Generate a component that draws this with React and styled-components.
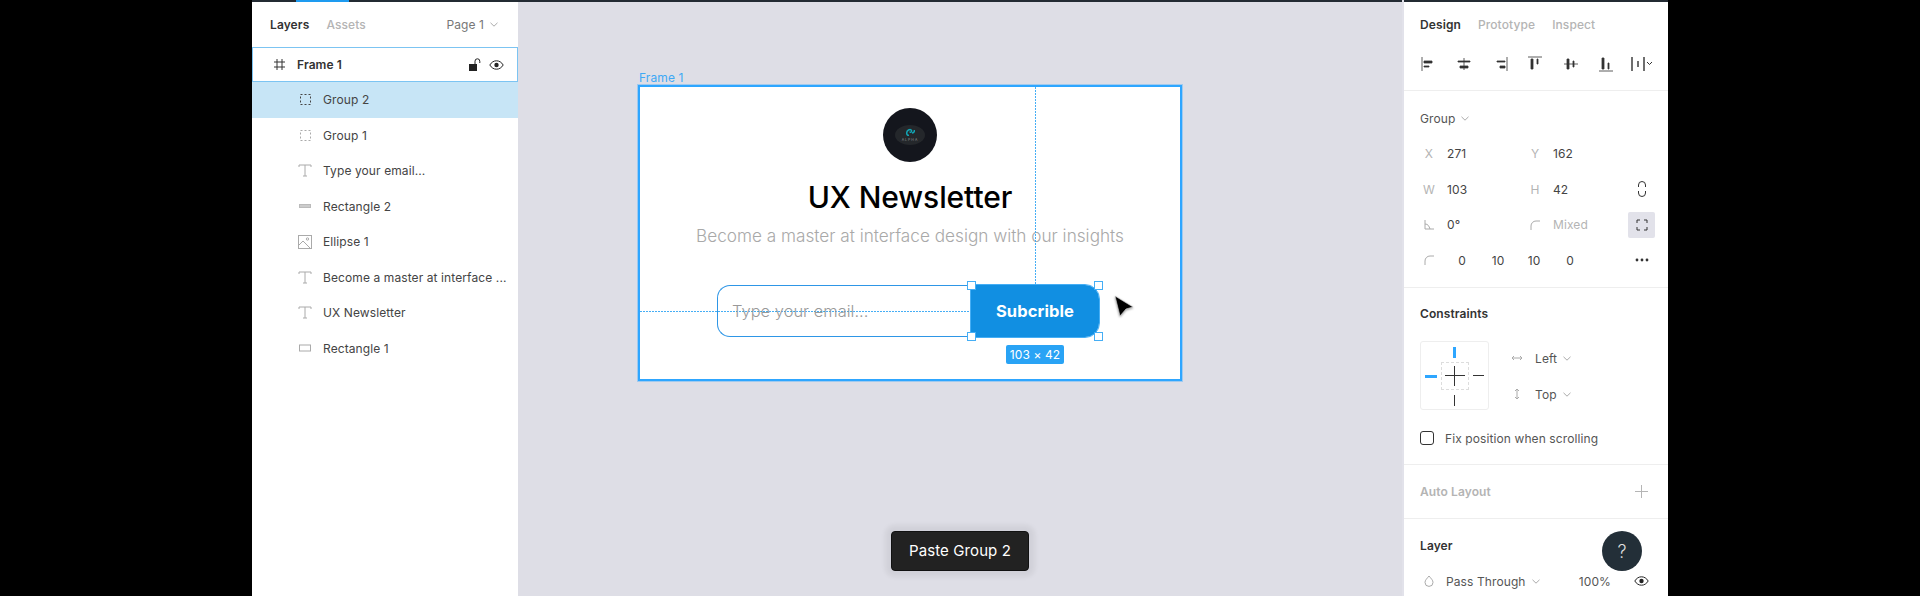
import React from "react";
import styled, { createGlobalStyle } from "styled-components";

const GlobalStyle = createGlobalStyle`
  html, body {
    margin: 0;
    padding: 0;
    background: #000;
    font-family: "Inter", "Liberation Sans", sans-serif;
  }
  * { box-sizing: border-box; }
`;

const layers = [
  { name: "Group 2", kind: "group", active: true },
  { name: "Group 1", kind: "groupLight" },
  { name: "Type your email...", kind: "text" },
  { name: "Rectangle 2", kind: "bar" },
  { name: "Ellipse 1", kind: "image" },
  { name: "Become a master at interface ...", kind: "text" },
  { name: "UX Newsletter", kind: "text" },
  { name: "Rectangle 1", kind: "rect" },
];

// small icons drawn by hand, figma's own set is not in the packages
const LayerIcon = ({ kind }) => {
  if (kind === "group" || kind === "groupLight") {
    const c = kind === "group" ? "#444" : "#aaa";
    return (
      <svg width="13" height="13" viewBox="0 0 13 13">
        <rect x="1.5" y="1.5" width="10" height="10" fill="none" stroke={c} strokeDasharray="2 2" />
      </svg>
    );
  }
  if (kind === "text") {
    return (
      <svg width="14" height="13" viewBox="0 0 14 13">
        <path d="M1 3V1h12v2M7 1v11M5 12h4" fill="none" stroke="#aaa" />
      </svg>
    );
  }
  if (kind === "bar") {
    return (
      <svg width="12" height="5" viewBox="0 0 12 5">
        <rect x="0.5" y="0.5" width="11" height="3" fill="#ccc" stroke="#bbb" />
      </svg>
    );
  }
  if (kind === "image") {
    return (
      <svg width="14" height="14" viewBox="0 0 14 14">
        <rect x="0.5" y="0.5" width="13" height="13" fill="none" stroke="#aaa" />
        <circle cx="9.5" cy="4" r="1.2" fill="none" stroke="#aaa" />
        <path d="M1 10l4-4 7 7" fill="none" stroke="#aaa" />
      </svg>
    );
  }
  return (
    <svg width="12" height="8" viewBox="0 0 12 8">
      <rect x="0.5" y="1" width="11" height="6" fill="none" stroke="#aaa" />
    </svg>
  );
};

const Eye = () => (
  <svg width="15" height="10" viewBox="0 0 15 10">
    <path d="M0.8 5C2.5 2.2 4.8 0.8 7.5 0.8S12.5 2.2 14.2 5C12.5 7.8 10.2 9.2 7.5 9.2S2.5 7.8 0.8 5Z" fill="none" stroke="#222" />
    <circle cx="7.5" cy="5" r="2.2" fill="#222" />
  </svg>
);

const Chevron = ({ color = "#aaa" }) => (
  <svg width="8" height="5" viewBox="0 0 8 5">
    <path d="M0.5 0.8L4 4.2l3.500-3.400" fill="none" stroke={color} />
  </svg>
);

const CornerMark = () => (
  <svg width="10" height="10" viewBox="0 0 10 10">
    <path d="M1 10V6a5 5 0 0 1 5-5h4" fill="none" stroke="#aaa" />
  </svg>
);

const alignIcons = [
  "M1 1v14 M3 5h8v2H3z M3 10h5v1H3z",
  "M8 2v12 M2 5h12v1H2z M4 10h8v2H4z",
  "M15 1v14 M5 5h8v1H5z M8 10h5v2H8z",
  "M1 1h14 M4 3v10h2V3z M10 3v5h1V3z",
  "M1 8h14 M4 3h2v10H4z M10 5h1v6h-1z",
  "M1 15h14 M4 2h2v11H4z M10 7h1v6h-1z",
];

const App = () => (
  <>
    <GlobalStyle />
    <Page>
      <LeftPanel>
        <TopStrip>
          <StripAccent />
        </TopStrip>
        <PanelTabs>
          <Tab $on>Layers</Tab>
          <Tab>Assets</Tab>
          <PagePicker>
            Page 1 <Chevron />
          </PagePicker>
        </PanelTabs>
        <FrameRow>
          <svg width="13" height="13" viewBox="0 0 13 13">
            <path d="M4 1v11M9 1v11M1 4h11M1 9h11" stroke="#333" fill="none" />
          </svg>
          <FrameName>Frame 1</FrameName>
          <RowTools>
            <svg width="13" height="14" viewBox="0 0 13 14">
              <rect x="0" y="6" width="8" height="7" fill="#222" />
              <path d="M6 6V3.2a2.4 2.4 0 0 1 4.8 0V5" fill="none" stroke="#222" />
            </svg>
            <Eye />
          </RowTools>
        </FrameRow>
        {layers.map((layer) => (
          <LayerRow key={layer.name} $active={layer.active}>
            <LayerIconBox>
              <LayerIcon kind={layer.kind} />
            </LayerIconBox>
            <span>{layer.name}</span>
          </LayerRow>
        ))}
      </LeftPanel>

      <Canvas>
        <TopStrip />
        <FrameLabel>Frame 1</FrameLabel>
        <Frame>
          <GuideV />
          <GuideH />
          <Avatar>
            <AvatarBlob>
              <svg width="10" height="8" viewBox="0 0 10 8">
                <path d="M4 7.500C1 7.500 1 3.500 3.500 2c2-1 3.500 0 3 1.500-.5 1-1.500 1-1.500 0M7 5c1.500 0 2.500-1 2.500-3" fill="none" stroke="#12a5b5" strokeWidth="1.500" />
              </svg>
              <AvatarText>ALPHA</AvatarText>
            </AvatarBlob>
          </Avatar>
          <Title>UX Newsletter</Title>
          <Subtitle>Become a master at interface design with our insights</Subtitle>
          <Form>
            <EmailBox>Type your email...</EmailBox>
            <SubmitButton>
              Subcrible
              <Handle $x="left" $y="top" />
              <Handle $x="right" $y="top" />
              <Handle $x="left" $y="bottom" />
              <Handle $x="right" $y="bottom" />
              <SizeTag>103 × 42</SizeTag>
            </SubmitButton>
            <Cursor width="24" height="26" viewBox="0 0 24 26">
              <path d="M3 2l18 11-7 2-6 7z" fill="#000" stroke="#ddd" strokeWidth="0.6" />
            </Cursor>
          </Form>
        </Frame>
        <Toast>Paste Group 2</Toast>
      </Canvas>

      <RightPanel>
        <TopStrip />
        <PanelTabs $right>
          <Tab $on>Design</Tab>
          <Tab>Prototype</Tab>
          <Tab>Inspect</Tab>
        </PanelTabs>
        <AlignBar>
          {alignIcons.map((d) => (
            <AlignCell key={d}>
              <svg width="16" height="16" viewBox="0 0 16 16">
                <path d={d} fill="#333" stroke="#333" strokeWidth="0.8" />
              </svg>
            </AlignCell>
          ))}
          <AlignCell>
            <svg width="22" height="16" viewBox="0 0 22 16">
              <path d="M1 1v14M13 1v14M7 5v6" stroke="#333" strokeWidth="1.4" fill="none" />
              <path d="M16 6l2.5 2.5L21 6" stroke="#333" fill="none" />
            </svg>
          </AlignCell>
        </AlignBar>
        <Section $height={197}>
          <SectionHead $top={9}>
            <Dropdown>
              Group <Chevron />
            </Dropdown>
          </SectionHead>
          <PropRow>
            <PropLabel>X</PropLabel>
            <PropValue>271</PropValue>
            <PropLabel>Y</PropLabel>
            <PropValue>162</PropValue>
          </PropRow>
          <PropRow>
            <PropLabel>W</PropLabel>
            <PropValue>103</PropValue>
            <PropLabel>H</PropLabel>
            <PropValue>42</PropValue>
            <ToolCell>
              <svg width="10" height="16" viewBox="0 0 10 16">
                <path d="M1.5 6V4a3.5 3.5 0 0 1 7 0v2M1.5 10v2a3.5 3.5 0 0 0 7 0v-2" fill="none" stroke="#333" />
              </svg>
            </ToolCell>
          </PropRow>
          <PropRow>
            <PropLabel>
              <svg width="10" height="10" viewBox="0 0 10 10">
                <path d="M1 0v9h9M1 4c3 0 4 2 5 5" fill="none" stroke="#aaa" />
              </svg>
            </PropLabel>
            <PropValue>0°</PropValue>
            <PropLabel>
              <CornerMark />
            </PropLabel>
            <PropValue $muted>Mixed</PropValue>
            <ToolCell $on>
              <svg width="12" height="12" viewBox="0 0 12 12">
                <path d="M1 4V1h3M8 1h3v3M11 8v3H8M4 11H1V8" fill="none" stroke="#333" />
              </svg>
            </ToolCell>
          </PropRow>
          <CornerRow>
            <PropLabel>
              <CornerMark />
            </PropLabel>
            <CornerValues>
              {["0", "10", "10", "0"].map((v, i) => (
                <CornerValue key={i}>{v}</CornerValue>
              ))}
            </CornerValues>
            <ToolCell>
              <svg width="14" height="4" viewBox="0 0 14 4">
                <circle cx="2" cy="2" r="1.4" fill="#333" />
                <circle cx="7" cy="2" r="1.4" fill="#333" />
                <circle cx="12" cy="2" r="1.4" fill="#333" />
              </svg>
            </ToolCell>
          </CornerRow>
        </Section>
        <Section $height={177}>
          <SectionHead $top={7}>
            <SectionTitle>Constraints</SectionTitle>
          </SectionHead>
          <ConstraintBody>
            <ConstraintBox>
              <InnerBox />
              <Plus $wide />
              <Plus />
              <Tick $pos="top" $on />
              <Tick $pos="bottom" />
              <Tick $pos="left" $on />
              <Tick $pos="right" />
            </ConstraintBox>
            <ConstraintPickers>
              <PickerRow>
                <svg width="12" height="8" viewBox="0 0 12 8">
                  <path d="M1 4h10M3 2L1 4l2 2M9 2l2 2-2 2" fill="none" stroke="#aaa" />
                </svg>
                <Dropdown>
                  Left <Chevron />
                </Dropdown>
              </PickerRow>
              <PickerRow>
                <svg width="12" height="12" viewBox="0 0 12 12">
                  <path d="M6 1v10M4 3l2-2 2 2M4 9l2 2 2-2" fill="none" stroke="#aaa" />
                </svg>
                <Dropdown>
                  Top <Chevron />
                </Dropdown>
              </PickerRow>
            </ConstraintPickers>
          </ConstraintBody>
          <CheckRow>
            <CheckBox />
            Fix position when scrolling
          </CheckRow>
        </Section>
        <Section $height={54}>
          <AutoHead>
            <SectionTitle $muted>Auto Layout</SectionTitle>
            <svg width="13" height="13" viewBox="0 0 13 13">
              <path d="M6.5 0v13M0 6.5h13" stroke="#b5b5b5" />
            </svg>
          </AutoHead>
        </Section>
        <Section>
          <SectionHead $top={8}>
            <SectionTitle>Layer</SectionTitle>
          </SectionHead>
          <BlendRow>
            <svg width="10" height="12" viewBox="0 0 10 12">
              <path d="M5 1c2 2.5 4 4.2 4 6.4A4 4 0 0 1 1 7.4C1 5.200 3 3.500 5 1Z" fill="none" stroke="#aaa" />
            </svg>
            <Dropdown>
              Pass Through <Chevron />
            </Dropdown>
            <Opacity>100%</Opacity>
            <Eye />
          </BlendRow>
        </Section>
        <HelpButton>?</HelpButton>
      </RightPanel>
    </Page>
  </>
);

export default App;

const Page = styled.div`
  display: flex;
  width: 1920px;
  height: 596px;
  padding-left: 252px;
  overflow: hidden;
  background: #000;
  color: #333;
  font-size: 12px;
  letter-spacing: 0.1px;
`;

const TopStrip = styled.div`
  height: 2px;
  background: #232b33;
  flex: none;
`;

const StripAccent = styled.div`
  width: 53px;
  height: 2px;
  margin-left: 44px;
  background: #1e9bf0;
`;

const LeftPanel = styled.aside`
  width: 266px;
  flex: none;
  background: #fff;
`;

const PanelTabs = styled.div`
  display: flex;
  align-items: center;
  gap: 17px;
  height: ${(p) => (p.$right ? 44 : 45)}px;
  padding: 0 20px 0 ${(p) => (p.$right ? 16 : 18)}px;
`;

const Tab = styled.span`
  font-weight: ${(p) => (p.$on ? 600 : 500)};
  color: ${(p) => (p.$on ? "#333" : "#b4b4b4")};
`;

const PagePicker = styled.span`
  display: flex;
  align-items: center;
  gap: 6px;
  margin-left: auto;
  color: #777;
`;

const FrameRow = styled.div`
  display: flex;
  align-items: center;
  height: 35px;
  padding: 0 13px 0 20px;
  border: 1px solid #7cc4f2;
`;

const FrameName = styled.span`
  margin-left: 11px;
  font-weight: 600;
`;

const RowTools = styled.div`
  display: flex;
  align-items: center;
  gap: 7px;
  margin-left: auto;
`;

const LayerRow = styled.div`
  display: flex;
  align-items: center;
  height: 35.5px;
  padding-left: 44px;
  color: #444;
  white-space: nowrap;
  background: ${(p) => (p.$active ? "#c7e5f6" : "transparent")};
`;

const LayerIconBox = styled.span`
  display: flex;
  align-items: center;
  justify-content: center;
  width: 18px;
  margin-right: 9px;
`;

const Canvas = styled.main`
  position: relative;
  width: 884px;
  flex: none;
  background: #dedee6;
`;

const FrameLabel = styled.div`
  position: absolute;
  left: 121px;
  top: 70px;
  color: #3fa9f5;
`;

const Frame = styled.div`
  position: absolute;
  left: 120px;
  top: 85px;
  display: flex;
  flex-direction: column;
  align-items: center;
  width: 544px;
  height: 296px;
  padding-top: 21px;
  background: #fff;
  border: 2px solid #2ea6ff;
  box-shadow: 0 0 0 1px rgba(46, 166, 255, 0.35);
`;

const GuideV = styled.div`
  position: absolute;
  left: 395px;
  top: 0;
  width: 1px;
  height: 198px;
  background: repeating-linear-gradient(180deg, #45aef5 0 2px, transparent 2px 3px);
`;

const GuideH = styled.div`
  position: absolute;
  left: 0;
  top: 224px;
  width: 331px;
  height: 1px;
  background: repeating-linear-gradient(90deg, #45aef5 0 2px, transparent 2px 3px);
`;

const Avatar = styled.div`
  display: flex;
  align-items: center;
  justify-content: center;
  width: 54px;
  height: 54px;
  flex: none;
  border-radius: 50%;
  background: #14161d;
`;

const AvatarBlob = styled.div`
  display: flex;
  flex-direction: column;
  align-items: center;
  justify-content: center;
  gap: 2px;
  width: 30px;
  height: 20px;
  border-radius: 50%;
  background: #24272b;
`;

const AvatarText = styled.span`
  font-size: 3.500px;
  line-height: 4px;
  letter-spacing: 1px;
  color: #8b8f94;
`;

const Title = styled.h1`
  margin: 15px 0 0;
  font-size: 30px;
  line-height: 40px;
  font-weight: 500;
  color: #000;
  letter-spacing: -0.1px;
`;

const Subtitle = styled.p`
  margin: 7px 0 0;
  font-size: 17.2px;
  line-height: 24px;
  font-weight: 300;
  color: #a9a9a9;
  letter-spacing: 0;
`;

const Form = styled.div`
  position: relative;
  display: flex;
  width: 382px;
  height: 52px;
  margin: 37px 4px 0 0;
`;

const EmailBox = styled.div`
  display: flex;
  align-items: center;
  flex: 1;
  padding-left: 14px;
  font-size: 16.5px;
  font-weight: 300;
  color: #999;
  letter-spacing: 0;
  border: 1.5px solid #2e96e6;
  border-right: 0;
  border-radius: 13px 0 0 13px;
`;

const SubmitButton = styled.div`
  position: relative;
  display: flex;
  align-items: center;
  justify-content: center;
  width: 128px;
  font-size: 16.5px;
  font-weight: 700;
  color: #fff;
  background: #118fe2;
  border-radius: 0 14px 14px 0;
  outline: 1px solid #45aef5;
`;

const Handle = styled.span`
  position: absolute;
  ${(p) => p.$x}: -4px;
  ${(p) => p.$y}: -4px;
  width: 9px;
  height: 9px;
  background: #fff;
  border: 1px solid #45aef5;
`;

const SizeTag = styled.span`
  position: absolute;
  left: 35px;
  top: 60px;
  width: 58px;
  height: 19px;
  font-size: 12px;
  font-weight: 400;
  line-height: 19px;
  text-align: center;
  background: #29a3f5;
  border-radius: 2px;
`;

const Cursor = styled.svg`
  position: absolute;
  left: 395px;
  top: 9px;
  filter: drop-shadow(0 1px 1px rgba(0, 0, 0, 0.4));
`;

const Toast = styled.div`
  position: absolute;
  left: 373px;
  top: 531px;
  width: 138px;
  height: 40px;
  font-size: 15px;
  line-height: 38px;
  text-align: center;
  color: #fff;
  background: #222;
  border: 1px solid #111;
  border-radius: 4px;
  box-shadow: 0 0 5px 6px rgba(0, 0, 0, 0.06);
`;

const RightPanel = styled.aside`
  position: relative;
  width: 266px;
  flex: none;
  background: #fff;
  border-left: 2px solid #e2e2ea;
`;

const AlignBar = styled.div`
  display: flex;
  height: 45px;
  padding: 6px 0 0 7px;
  border-bottom: 1px solid #eee;
`;

const AlignCell = styled.div`
  display: flex;
  align-items: center;
  justify-content: center;
  width: 35.5px;
  height: 24px;
`;

const Section = styled.section`
  ${(p) => p.$height && `height: ${p.$height}px;`}
  padding: 0 11px 0 16px;
  border-bottom: ${(p) => (p.$height ? "1px solid #eee" : "0")};
`;

const SectionHead = styled.div`
  display: flex;
  align-items: center;
  height: ${(p) => 36 + p.$top}px;
  padding-top: ${(p) => p.$top}px;
`;

const SectionTitle = styled.span`
  font-weight: 600;
  color: ${(p) => (p.$muted ? "#b4b4b4" : "#333")};
`;

const Dropdown = styled.span`
  display: inline-flex;
  align-items: center;
  gap: 6px;
  color: #555;
`;

const PropRow = styled.div`
  display: grid;
  grid-template-columns: 18px 70px 18px 66px 27px;
  column-gap: 9px;
  align-items: center;
  height: 35.5px;
  grid-auto-flow: column;
`;

const PropLabel = styled.span`
  display: flex;
  justify-content: center;
  flex: none;
  width: 18px;
  color: #b4b4b4;
`;

const PropValue = styled.span`
  color: ${(p) => (p.$muted ? "#b4b4b4" : "#444")};
`;

const ToolCell = styled.span`
  display: flex;
  align-items: center;
  justify-content: center;
  grid-column: 5;
  width: 27px;
  height: 26px;
  border-radius: 2px;
  background: ${(p) => (p.$on ? "#e2e2ea" : "transparent")};
`;

const CornerRow = styled.div`
  display: flex;
  align-items: center;
  height: 35.5px;
`;

const CornerValues = styled.div`
  display: flex;
  width: 190px;
  padding-left: 6px;
`;

const CornerValue = styled.span`
  width: 36px;
  text-align: center;
  color: #444;
`;

const ConstraintBody = styled.div`
  display: flex;
  margin-top: 10px;
`;

const ConstraintBox = styled.div`
  position: relative;
  width: 69px;
  height: 69px;
  border: 1px solid #eee;
  border-radius: 3px;
`;

const InnerBox = styled.div`
  position: absolute;
  left: 20px;
  top: 20px;
  width: 28px;
  height: 28px;
  border: 1px dashed #ddd;
`;

const Plus = styled.div`
  position: absolute;
  left: ${(p) => (p.$wide ? 24 : 33)}px;
  top: ${(p) => (p.$wide ? 33 : 24)}px;
  width: ${(p) => (p.$wide ? 20 : 1)}px;
  height: ${(p) => (p.$wide ? 1 : 20)}px;
  background: #333;
`;

const tickPlace = {
  top: "left: 32px; top: 5px; width: 3px; height: 11px;",
  bottom: "left: 33px; top: 53px; width: 1px; height: 11px;",
  left: "left: 4px; top: 33px; width: 12px; height: 3px;",
  right: "left: 52px; top: 33px; width: 11px; height: 1px;",
};

const Tick = styled.span`
  position: absolute;
  ${(p) => tickPlace[p.$pos]}
  background: ${(p) => (p.$on ? "#2ea6ff" : "#333")};
`;

const ConstraintPickers = styled.div`
  display: flex;
  flex-direction: column;
  margin: -1px 0 0 22px;
`;

const PickerRow = styled.div`
  display: flex;
  align-items: center;
  gap: 12px;
  height: 36px;
  & > svg { width: 12px; flex: none; }
`;

const CheckRow = styled.label`
  display: flex;
  align-items: center;
  gap: 11px;
  height: 18px;
  margin-top: 17px;
  color: #555;
`;

const CheckBox = styled.span`
  width: 14px;
  height: 14px;
  border: 1px solid #333;
  border-radius: 3px;
`;

const AutoHead = styled.div`
  display: flex;
  align-items: center;
  justify-content: space-between;
  height: 53px;
  padding-right: 9.5px;
`;

const BlendRow = styled.div`
  display: flex;
  align-items: center;
  height: 36px;
  padding: 0 8px 0 4px;
  & > svg:first-child { margin-right: 12px; }
`;

const Opacity = styled.span`
  margin-left: auto;
  margin-right: 23px;
  color: #555;
`;

const HelpButton = styled.div`
  position: absolute;
  left: 198px;
  top: 531px;
  display: flex;
  align-items: center;
  justify-content: center;
  width: 40px;
  height: 40px;
  font-size: 18px;
  font-weight: 300;
  color: #ddd;
  background: #232f38;
  border-radius: 50%;
`;
